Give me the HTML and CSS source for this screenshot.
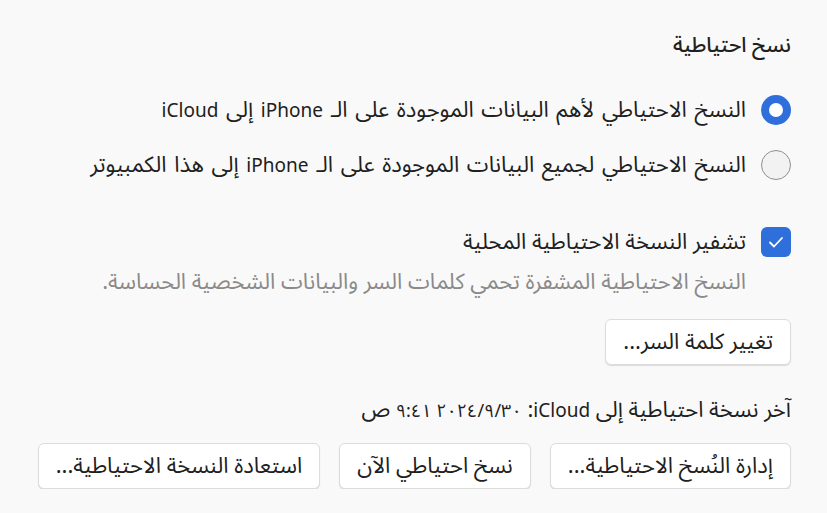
FILE: index.html
```html
<!DOCTYPE html>
<html lang="ar" dir="rtl">
<head>
    <meta charset="UTF-8">
    <title>نسخ احتياطية</title>
    <link rel="stylesheet" href="styles.css">
</head>
<body>
    <div class="panel">
        <h2 class="title">نسخ احتياطية</h2>

        <div class="options">
            <label class="row">
                <span class="radio checked"></span>
                <span class="opt_text">النسخ الاحتياطي لأهم البيانات الموجودة على الـ <span class="lat">iPhone</span> إلى <span class="lat">iCloud</span></span>
            </label>
            <label class="row">
                <span class="radio"></span>
                <span class="opt_text">النسخ الاحتياطي لجميع البيانات الموجودة على الـ <span class="lat">iPhone</span> إلى هذا الكمبيوتر</span>
            </label>
        </div>

        <label class="row encrypt">
            <span class="checkbox">
                <svg width="20" height="20" viewBox="0 0 20 20"><path d="M4 10.5l4 4L16 6" fill="none" stroke="#fff" stroke-width="1.8" stroke-linecap="round" stroke-linejoin="round"/></svg>
            </span>
            <span>تشفير النسخة الاحتياطية المحلية</span>
        </label>
        <div class="hint">النسخ الاحتياطية المشفرة تحمي كلمات السر والبيانات الشخصية الحساسة.</div>

        <div class="btn_row pw">
            <button>تغيير كلمة السر...</button>
        </div>

        <div class="last">آخر نسخة احتياطية إلى <span class="lat">iCloud</span>: <span class="num">٢٠٢٤/٩/٣٠ ٩:٤١</span> ص</div>

        <div class="btn_row actions">
            <button>إدارة النُسخ الاحتياطية...</button>
            <button>نسخ احتياطي الآن</button>
            <button>استعادة النسخة الاحتياطية...</button>
        </div>
    </div>
</body>
</html>
```

FILE: styles.css
```css
body {
    margin: 0;
    background-color: #f9f9f9;
    color: #202020;
    font-family: "Noto Sans Arabic", "Noto Sans", sans-serif;
    font-size: 22px;
}

.lat {
    font-family: "Noto Sans", sans-serif;
    font-size: 19px;
    font-weight: 400;
}

.num {
    font-size: 18px;
}

.panel {
    padding: 31px 36px 0 36px;
}

.title {
    margin: 0;
    font-size: 21px;
    font-weight: 500;
    line-height: 28px;
}

.options {
    margin-top: 36px;
    display: flex;
    flex-direction: column;
    gap: 25px;
}

.row {
    display: flex;
    align-items: center;
    gap: 15px;
    line-height: 30px;
}

.opt_text {
    word-spacing: 2px;
}

.radio {
    width: 30px;
    height: 30px;
    box-sizing: border-box;
    border-radius: 50%;
    border: 1.5px solid #8f8f8f;
    background-color: #f2f2f2;
    flex-shrink: 0;
}

.radio.checked {
    border: 8px solid #2f6fdc;
    background-color: #fff;
}

.encrypt {
    margin-top: 47px;
}

.checkbox {
    width: 30px;
    height: 30px;
    border-radius: 6px;
    background-color: #2f6fdc;
    display: flex;
    align-items: center;
    justify-content: center;
    flex-shrink: 0;
}

.hint {
    margin-top: 11px;
    margin-right: 45px;
    line-height: 28px;
    color: #8a8a8a;
}

.btn_row {
    display: flex;
    gap: 19px;
}

.pw {
    margin-top: 23px;
}

.last {
    margin-top: 31px;
    line-height: 28px;
}

.actions {
    margin-top: 18px;
}

button {
    font-family: inherit;
    font-size: 22px;
    line-height: 28px;
    white-space: nowrap;
    color: #202020;
    height: 46px;
    padding: 0 17px;
    background-color: #fff;
    border: 1px solid #dcdcdc;
    border-radius: 6px;
    box-shadow: 0 1px 1px rgba(0, 0, 0, 0.12);
    cursor: pointer;
}
```
